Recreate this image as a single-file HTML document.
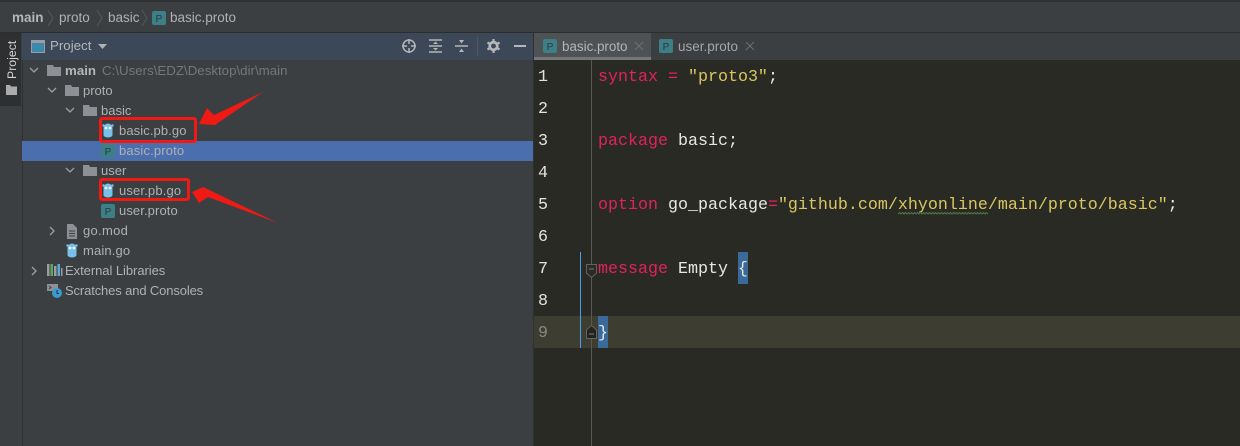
<!DOCTYPE html>
<html><head><meta charset="utf-8">
<style>
html,body{margin:0;padding:0;background:#3c3f41}
#r{position:relative;width:1240px;height:446px;overflow:hidden;background:#3c3f41;font-family:"Liberation Sans",sans-serif;font-size:13px;color:#afb1b3}
.a{position:absolute;white-space:nowrap}
.t{position:absolute;white-space:nowrap;line-height:20px;height:20px}
.c{position:absolute;white-space:pre;font-family:"Liberation Mono",monospace;font-size:16.67px;line-height:32px;height:32px;left:598px;color:#e8e8e2}
.n{position:absolute;left:538px;width:12px;font-family:"Liberation Mono",monospace;font-size:16.67px;line-height:32px;color:#e4e4de}
.k{color:#e0225f}.s{color:#d9c660}
svg{position:absolute;overflow:visible}
</style></head><body><div id="r">
<div class="a" style="left:0;top:0;width:1240px;height:2px;background:#2f3133"></div>
<div class="a" style="left:0;top:32px;width:1240px;height:1px;background:#2b2d2e"></div>

<!-- breadcrumb -->
<div class="t" style="left:12px;top:8px;font-weight:bold;color:#b4b6b8;font-size:13.5px">main</div>
<svg style="left:47px;top:9px" width="7" height="18"><path d="M1 1L6 9L1 17" fill="none" stroke="#55585a"/></svg>
<div class="t" style="left:59px;top:8px;font-size:13.5px">proto</div>
<svg style="left:96px;top:9px" width="7" height="18"><path d="M1 1L6 9L1 17" fill="none" stroke="#55585a"/></svg>
<div class="t" style="left:108px;top:8px;font-size:13.5px">basic</div>
<svg style="left:141px;top:9px" width="7" height="18"><path d="M1 1L6 9L1 17" fill="none" stroke="#55585a"/></svg>
<svg style="left:152px;top:11px" width="14" height="14"><rect width="14" height="14" rx="2" fill="#3d7f86"/><text x="7" y="11" font-size="10" text-anchor="middle" fill="#2a3a3e" font-family="Liberation Sans">P</text></svg>
<div class="t" style="left:170px;top:8px;font-size:13.5px">basic.proto</div>

<!-- left strip -->
<div class="a" style="left:0;top:33px;width:22px;height:413px;background:#3c3f41;border-right:1px solid #2e3032"></div>
<div class="a" style="left:0;top:33px;width:21px;height:73px;background:#2d2f30"></div>
<div class="a" style="left:4px;top:79px;color:#d4d4d4;font-size:12.3px;line-height:16px;transform:rotate(-90deg);transform-origin:0 0;">Project</div>
<svg style="left:6px;top:85px" width="11" height="10"><path d="M0 0H4L5 1.500H11V10H0Z" fill="#a9abad"/></svg>

<!-- project header -->
<div class="a" style="left:22px;top:33px;width:512px;height:27px;background:#3c4858"></div>
<svg style="left:31px;top:40px" width="14" height="13"><rect x=".5" y=".5" width="13" height="12" fill="#3d88ad" stroke="#9a9ea2"/><rect x=".5" y=".5" width="13" height="2.500" fill="#9a9ea2"/></svg>
<div class="t" style="left:50px;top:36px;color:#b3b6b9;font-size:13.3px">Project</div>
<svg style="left:98px;top:44px" width="10" height="6"><path d="M0 0H9L4.500 5Z" fill="#afb1b3"/></svg>
<svg style="left:402px;top:39px" width="14" height="14"><circle cx="7" cy="7" r="6" fill="none" stroke="#b4b6b8" stroke-width="1.500"/><path d="M7 0V5M7 9V14M0 7H5M9 7H14" stroke="#b4b6b8" stroke-width="1.500"/></svg>
<svg style="left:429px;top:39px" width="13" height="14"><path d="M0 1H13M0 13H13M0 7H13" stroke="#b4b6b8" stroke-width="1.500"/><path d="M4 5L6.500 2.500L9 5ZM4 9L6.500 11.500L9 9Z" fill="#b4b6b8"/></svg>
<svg style="left:455px;top:39px" width="13" height="14"><path d="M0 7H13" stroke="#b4b6b8" stroke-width="1.500"/><path d="M4 1L6.500 4.500L9 1ZM4 13L6.500 9.500L9 13Z" fill="#b4b6b8"/></svg>
<div class="a" style="left:477px;top:37px;width:1px;height:19px;background:#4e5a68"></div>
<svg style="left:487px;top:39px" width="13" height="14"><circle cx="6.500" cy="7" r="3.800" fill="none" stroke="#b4b6b8" stroke-width="2.800"/><path d="M6.500 0V3M6.500 11V14M0.500 3.500L3 5M10 9L12.500 10.500M0.500 10.500L3 9M10 5L12.500 3.500" stroke="#b4b6b8" stroke-width="2.200"/></svg>
<div class="a" style="left:514px;top:45px;width:12px;height:2px;background:#b4b6b8"></div>

<!-- tree -->
<div class="a" style="left:22px;top:141px;width:512px;height:20px;background:#4b6eaf"></div>
<svg style="left:0;top:0" width="534" height="300">
<g fill="none" stroke="#9c9ea0" stroke-width="1.300">
<path d="M30 68L34 72L38 68M48 88L52 92L56 88M66 108L70 112L74 108M66 168L70 172L74 168M50 227L54 231L50 235M32 267L36 271L32 275"/>
</g>
<g fill="#8d9195">
<path d="M47 65H53L54 67H61V76H47Z"/>
<path d="M65 85H71L72 87H79V96H65Z"/>
<path d="M83 105H89L90 107H97V116H83Z"/>
<path d="M83 165H89L90 167H97V176H83Z"/>
<path d="M67 224H73L77 228V239H67Z"/>
</g>
<path d="M69 231H75M69 233.500H75M69 236H75" stroke="#3c3f41"/>
<g>
<rect x="47" y="264" width="2.500" height="12" fill="#9a9ea2"/><rect x="50.500" y="264" width="2.500" height="12" fill="#62a85c"/><rect x="54" y="266" width="2.500" height="10" fill="#9a9ea2"/><rect x="57.500" y="264" width="2.500" height="12" fill="#5aa8d8"/><rect x="61" y="268" width="1.500" height="8" fill="#9a9ea2"/>
<path d="M47 284H58V291H47Z" fill="#8d9195"/><path d="M49 286L51 287.500L49 289" fill="none" stroke="#3c3f41"/>
<circle cx="57" cy="293" r="5" fill="#3a9bd1"/><path d="M57 290V293.500H59" fill="none" stroke="#24303a"/>
</g>
<!-- gophers -->
<g fill="#78bfe9">
<path d="M103.500 128a4.500 4.500 0 0 1 9 0V135a4.500 2.500 0 0 1-9 0Z"/><circle cx="103.500" cy="125.500" r="1.200"/><circle cx="112.500" cy="125.500" r="1.200"/>
<path d="M103.500 188a4.500 4.500 0 0 1 9 0V195a4.500 2.500 0 0 1-9 0Z"/><circle cx="103.500" cy="185.500" r="1.200"/><circle cx="112.500" cy="185.500" r="1.200"/>
<path d="M67.500 248a4.500 4.500 0 0 1 9 0V255a4.500 2.500 0 0 1-9 0Z"/><circle cx="67.500" cy="245.500" r="1.200"/><circle cx="76.500" cy="245.500" r="1.200"/>
</g>
<g fill="#eaf4fa">
<circle cx="106" cy="128" r="1.400"/><circle cx="110" cy="128" r="1.400"/>
<circle cx="106" cy="188" r="1.400"/><circle cx="110" cy="188" r="1.400"/>
<circle cx="70" cy="248" r="1.400"/><circle cx="74" cy="248" r="1.400"/>
</g>
<!-- P icons -->
<rect x="101" y="144" width="14" height="14" rx="2" fill="#3d7f86"/>
<rect x="101" y="204" width="14" height="14" rx="2" fill="#3d7f86"/>
<text x="108" y="155" font-size="10" text-anchor="middle" fill="#2a3a3e" font-family="Liberation Sans">P</text>
<text x="108" y="215" font-size="10" text-anchor="middle" fill="#2a3a3e" font-family="Liberation Sans">P</text>
</svg>

<div class="t" style="left:65px;top:61px;font-weight:bold;color:#b4b6b8;font-size:13.3px">main</div>
<div class="t" style="left:102px;top:61px;font-size:13.3px;color:#747779">C:\Users\EDZ\Desktop\dir\main</div>
<div class="t" style="left:83px;top:81px">proto</div>
<div class="t" style="left:101px;top:101px">basic</div>
<div class="t" style="left:119px;top:121px;letter-spacing:.1px">basic.pb.go</div>
<div class="t" style="left:119px;top:141px;letter-spacing:.15px">basic.proto</div>
<div class="t" style="left:101px;top:161px">user</div>
<div class="t" style="left:119px;top:181px;letter-spacing:.15px">user.pb.go</div>
<div class="t" style="left:119px;top:201px;letter-spacing:.1px">user.proto</div>
<div class="t" style="left:83px;top:221px;letter-spacing:.3px">go.mod</div>
<div class="t" style="left:83px;top:241px;letter-spacing:.15px">main.go</div>
<div class="t" style="left:65px;top:261px;letter-spacing:-.05px">External Libraries</div>
<div class="t" style="left:65px;top:281px;letter-spacing:-.13px">Scratches and Consoles</div>

<!-- editor -->
<div class="a" style="left:533px;top:33px;width:1px;height:413px;background:#2e3032"></div>
<div class="a" style="left:534px;top:33px;width:706px;height:27px;background:#3c3f41"></div>
<div class="a" style="left:534px;top:33px;width:117px;height:27px;background:#4e5254"></div>
<div class="a" style="left:534px;top:57px;width:117px;height:3px;background:#74777a"></div>
<svg style="left:543px;top:39px" width="14" height="14"><rect width="14" height="14" rx="2" fill="#3d7f86"/><text x="7" y="11" font-size="10" text-anchor="middle" fill="#2a3a3e" font-family="Liberation Sans">P</text></svg>
<div class="t" style="left:562px;top:37px;color:#b3b5b7;font-size:13.4px">basic.proto</div>
<svg style="left:635px;top:42px" width="8" height="8"><path d="M0 0L8 8M8 0L0 8" stroke="#6d7072"/></svg>
<svg style="left:659px;top:39px" width="14" height="14"><rect width="14" height="14" rx="2" fill="#3d7f86"/><text x="7" y="11" font-size="10" text-anchor="middle" fill="#2a3a3e" font-family="Liberation Sans">P</text></svg>
<div class="t" style="left:678px;top:37px;color:#a4a6a8;font-size:13.5px">user.proto</div>
<svg style="left:746px;top:42px" width="8" height="8"><path d="M0 0L8 8M8 0L0 8" stroke="#6d7072"/></svg>

<div class="a" style="left:534px;top:60px;width:706px;height:386px;background:#2a2a24"></div>
<div class="a" style="left:534px;top:316px;width:706px;height:32px;background:#3e3d32"></div>
<div class="a" style="left:591px;top:60px;width:1px;height:386px;background:#565753"></div>
<div class="a" style="left:580px;top:252px;width:1px;height:96px;background:#4a9fe8"></div>
<div class="a" style="left:738px;top:252px;width:10px;height:32px;background:#3a6a9a"></div>
<div class="a" style="left:598px;top:316px;width:10px;height:32px;background:#3a6a9a"></div>

<svg style="left:586px;top:264px" width="11" height="14"><path d="M.5 .5H10.500V9L5.500 13.500L.5 9Z" fill="#2a2b26" stroke="#62635e"/><path d="M3 5H8" stroke="#7a7b76"/></svg>
<svg style="left:586px;top:325px" width="11" height="14"><path d="M.5 13.500H10.500V5L5.500 .5L.5 5Z" fill="#232420" stroke="#62635e"/><path d="M3 9H8" stroke="#7a7b76"/></svg>

<div class="n" style="top:62px">1</div>
<div class="n" style="top:94px">2</div>
<div class="n" style="top:126px">3</div>
<div class="n" style="top:158px">4</div>
<div class="n" style="top:190px">5</div>
<div class="n" style="top:222px">6</div>
<div class="n" style="top:254px">7</div>
<div class="n" style="top:286px">8</div>
<div class="n" style="top:318px;color:#8a8a84">9</div>

<div class="c" style="top:62px"><span class="k">syntax = </span><span class="s">"proto3"</span>;</div>
<div class="c" style="top:126px"><span class="k">package</span> basic;</div>
<div class="c" style="top:190px"><span class="k">option</span> go_package<span class="k">=</span><span class="s">"github.com/xhyonline/main/proto/basic"</span>;</div>
<div class="c" style="top:254px"><span class="k">message</span> Empty {</div>
<div class="c" style="top:318px">}</div>
<svg style="left:898px;top:212px" width="90" height="4"><path d="M0 2L1.500 0.500L3 2L4.500 0.500L6 2L7.500 0.500L9 2L10.500 0.500L12 2L13.500 0.500L15 2L16.500 0.500L18 2L19.500 0.500L21 2L22.500 0.500L24 2L25.500 0.500L27 2L28.500 0.500L30 2L31.500 0.500L33 2L34.500 0.500L36 2L37.500 0.500L39 2L40.500 0.500L42 2L43.500 0.500L45 2L46.500 0.500L48 2L49.500 0.500L51 2L52.500 0.500L54 2L55.500 0.500L57 2L58.500 0.500L60 2L61.500 0.500L63 2L64.500 0.500L66 2L67.500 0.500L69 2L70.500 0.500L72 2L73.500 0.500L75 2L76.500 0.500L78 2L79.500 0.500L81 2L82.500 0.500L84 2L85.500 0.500L87 2L88.500 0.500L90 2" fill="none" stroke="#4f7547"/></svg>

<!-- annotations -->
<div class="a" style="left:99px;top:117px;width:92px;height:20px;border:3px solid #f01a14;border-radius:3px"></div>
<div class="a" style="left:99px;top:178px;width:85px;height:17px;border:3px solid #f01a14;border-radius:3px"></div>
<svg style="left:0;top:0" width="300" height="240">
<path d="M263 92L214 115L207 108L199 124L215 125Z" fill="#f01a14"/>
<path d="M278 223L203 187L192 192L199 203L208 197Z" fill="#f01a14"/>
</svg>
</div></body></html>
